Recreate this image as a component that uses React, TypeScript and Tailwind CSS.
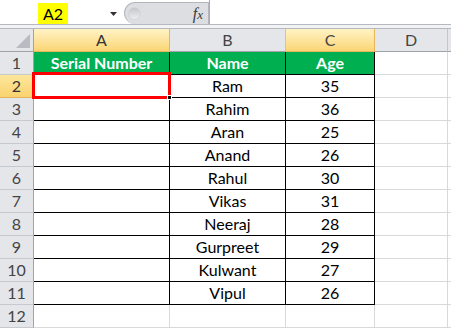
import React from "react";

const names = ["Ram", "Rahim", "Aran", "Anand", "Rahul", "Vikas", "Neeraj", "Gurpreet", "Kulwant", "Vipul"];
const ages = [35, 36, 25, 26, 30, 31, 28, 29, 27, 26];

const font = { fontFamily: "Lato, 'Open Sans', 'Liberation Sans', sans-serif" };

function RowHeader({ n, active }: { n: number; active?: boolean }) {
  return (
    <div
      className={
        "w-[34px] shrink-0 h-full flex items-center justify-center border-r border-b text-[16px] " +
        (active
          ? "bg-gradient-to-b from-[#fde79c] to-[#f9d36e] border-r-[#e3a93f] border-b-[#e3b45a] text-[#333]"
          : "bg-[#e4e6ea] border-r-[#9fa4ab] border-b-[#c6c9ce] text-[#444]")
      }
    >
      {n}
    </div>
  );
}

export default function App() {
  return (
    <div className="w-[451px] h-[329px] overflow-hidden bg-white relative" style={font}>
      {/* Formula bar */}
      <div className="flex h-[25px] border-b border-[#b5b9bf] bg-white">
        <div className="w-[124px] shrink-0 flex items-end relative">
          <div className="ml-[38px] w-[30px] h-[21px] bg-[#ffff00] flex items-center justify-center text-[16px] text-black leading-none">
            A2
          </div>
          <svg className="absolute left-[110px] top-[12px]" width="7" height="5" viewBox="0 0 7 5">
            <polygon points="0,0 7,0 3.5,4" fill="#333" />
          </svg>
        </div>
        <div className="w-[85px] shrink-0 mt-[2px] bg-[#dcdee2] border border-[#b3b7bd] border-b-0 rounded-l-[12px] relative flex items-center justify-end pr-[5px]">
          <div className="absolute left-[3px] top-[4px] w-[13px] h-[13px] rounded-full bg-gradient-to-b from-[#c4c7cc] to-[#eceef1] border border-[#d2d5d9]" />
          <span
            className="text-[16px] italic text-[#3a3a3a] leading-none"
            style={{ fontFamily: "'Liberation Serif', 'DejaVu Serif', serif" }}
          >
            f<span className="text-[13px]">x</span>
          </span>
        </div>
        <div className="flex-1 bg-white border-l border-[#a9adb3]" />
      </div>
      <div className="h-[4px] bg-[#f2f3f5] border-b border-[#b5b9bf]" />

      {/* Grid */}
      <div className="relative">
        {/* Column header row */}
        <div className="flex h-[23px]">
          <div className="w-[34px] shrink-0 h-full bg-[#e4e6ea] border-r border-b border-[#9fa4ab] relative overflow-hidden">
            <svg className="absolute right-[3px] bottom-[3px]" width="14" height="14" viewBox="0 0 14 14">
              <polygon points="14,0 14,14 0,14" fill="#b8bcc2" />
            </svg>
          </div>
          <div className="w-[136px] shrink-0 h-full flex items-center justify-center bg-gradient-to-b from-[#fff3c4] to-[#fbd574] border-r border-b border-[#e6b55c] text-[16px] text-[#333]">
            A
          </div>
          <div className="w-[116px] shrink-0 h-full flex items-center justify-center bg-[#e4e6ea] border-r border-b border-[#c2c6cc] border-b-[#9fa4ab] text-[16px] text-[#444]">
            B
          </div>
          <div className="w-[89px] shrink-0 h-full flex items-center justify-center bg-gradient-to-b from-[#fff3c4] to-[#fbd574] border-r border-b border-[#e6b55c] text-[16px] text-[#444]">
            C
          </div>
          <div className="w-[73px] shrink-0 h-full flex items-center justify-center bg-[#e4e6ea] border-r border-b border-[#c2c6cc] border-b-[#9fa4ab] text-[16px] text-[#444]">
            D
          </div>
          <div className="flex-1 h-full bg-[#e4e6ea] border-b border-[#9fa4ab]" />
        </div>

        {/* Row 1 */}
        <div className="flex h-[23px]">
          <RowHeader n={1} />
          <div className="w-[136px] shrink-0 h-full flex items-center justify-center bg-[#00b050] border-r border-b border-black text-white font-bold text-[16px]">
            Serial Number
          </div>
          <div className="w-[116px] shrink-0 h-full flex items-center justify-center bg-[#00b050] border-r border-b border-black text-white font-bold text-[16px]">
            Name
          </div>
          <div className="w-[89px] shrink-0 h-full flex items-center justify-center bg-[#00b050] border-r border-b border-black text-white font-bold text-[16px]">
            Age
          </div>
          <div className="w-[73px] shrink-0 h-full border-r border-b border-[#d9d9d9]" />
          <div className="flex-1 h-full border-b border-[#d9d9d9]" />
        </div>

        {names.map((name, i) => (
          <div key={name} className="flex h-[23px]">
            <RowHeader n={i + 2} active={i === 0} />
            <div className="w-[136px] shrink-0 h-full border-r border-b border-black" />
            <div className="w-[116px] shrink-0 h-full flex items-center justify-center border-r border-b border-black text-black text-[16px]">
              {name}
            </div>
            <div className="w-[89px] shrink-0 h-full flex items-center justify-center border-r border-b border-black text-black text-[16px]">
              {ages[i]}
            </div>
            <div className="w-[73px] shrink-0 h-full border-r border-b border-[#d9d9d9]" />
            <div className="flex-1 h-full border-b border-[#d9d9d9]" />
          </div>
        ))}

        {/* Row 12 */}
        <div className="flex h-[23px]">
          <RowHeader n={12} />
          <div className="w-[136px] shrink-0 h-full border-r border-b border-[#d9d9d9]" />
          <div className="w-[116px] shrink-0 h-full border-r border-b border-[#d9d9d9]" />
          <div className="w-[89px] shrink-0 h-full border-r border-b border-[#d9d9d9]" />
          <div className="w-[73px] shrink-0 h-full border-r border-b border-[#d9d9d9]" />
          <div className="flex-1 h-full border-b border-[#d9d9d9]" />
        </div>

        {/* Selection overlay on A2 */}
        <div className="absolute left-[32px] top-[43px] w-[139px] h-[27px] border-[3px] border-[#ff0000]" />
        <div className="absolute left-[167px] top-[66px] w-[5px] h-[5px] bg-black border border-white" />
      </div>
    </div>
  );
}
